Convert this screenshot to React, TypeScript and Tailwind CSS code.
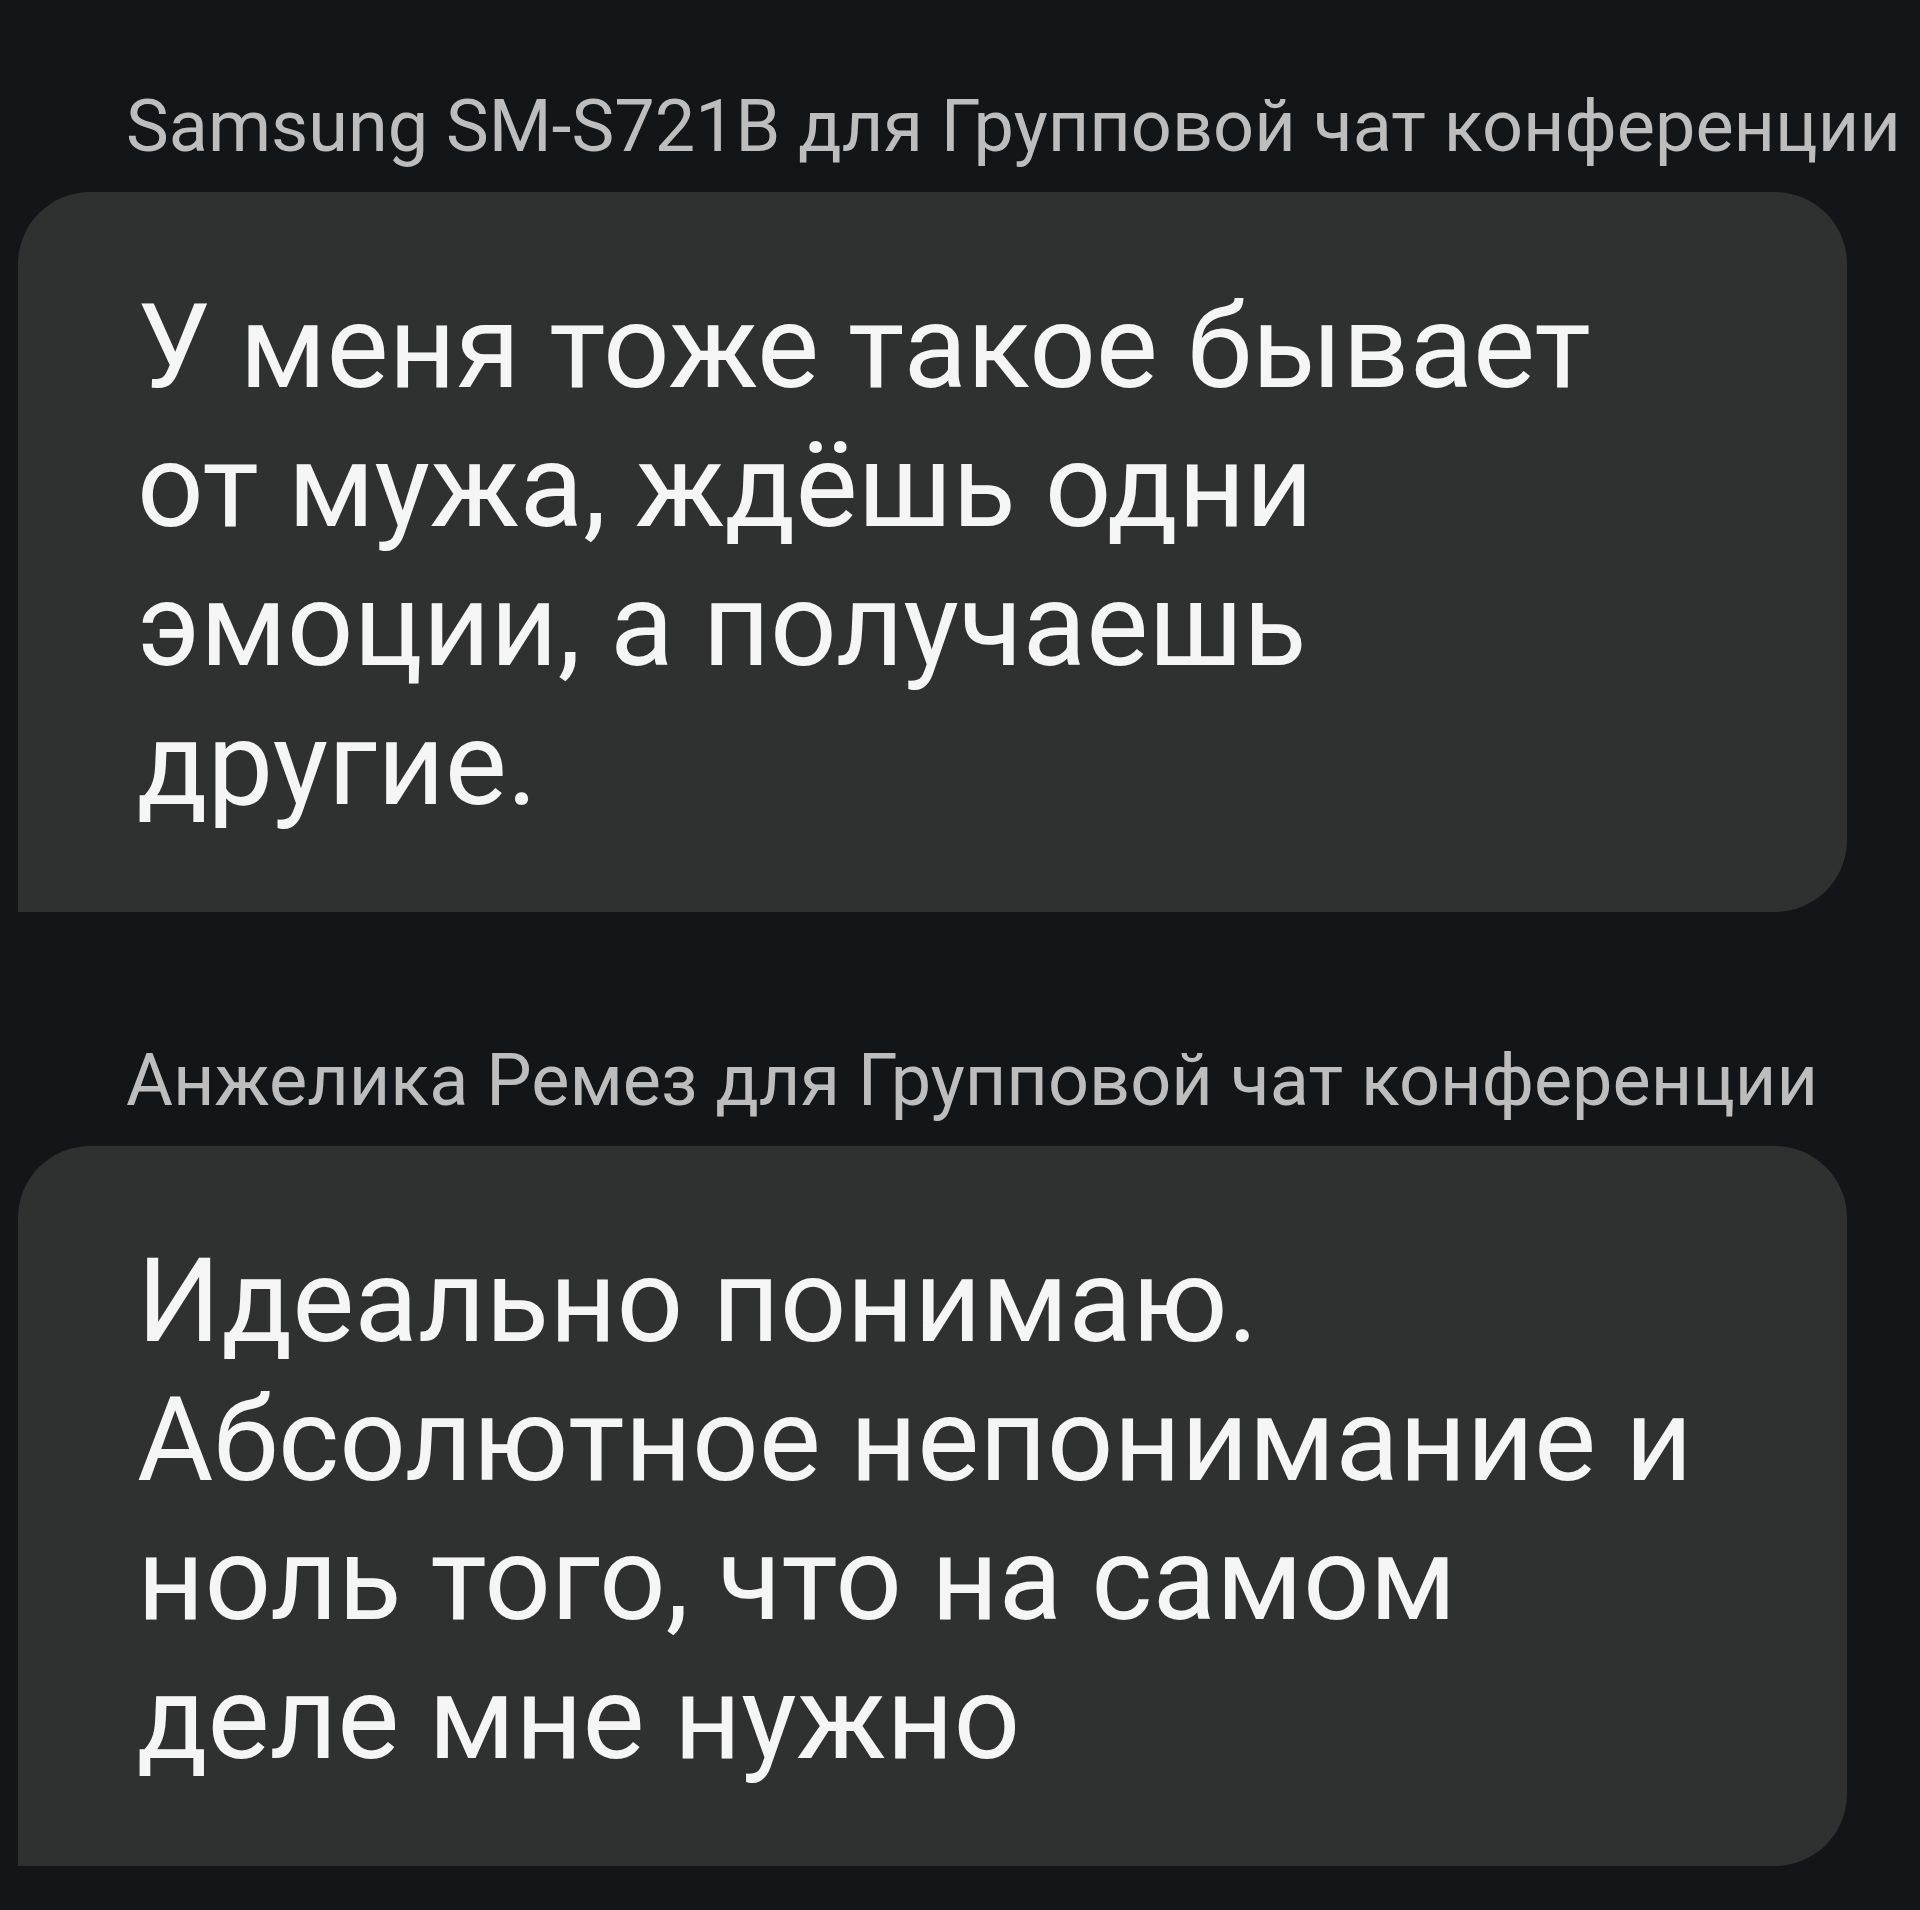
const messages = [
  {
    sender: "Samsung SM-S721B",
    lines: [
      "У меня тоже такое бывает",
      "от мужа, ждёшь одни",
      "эмоции, а получаешь",
      "другие.",
    ],
  },
  {
    sender: "Анжелика Ремез",
    lines: [
      "Идеально понимаю.",
      "Абсолютное непонимание и",
      "ноль того, что на самом",
      "деле мне нужно",
    ],
  },
];

function Message({ sender, lines }: { sender: string; lines: string[] }) {
  return (
    <div className="flex flex-col">
      {/* sender line */}
      <div className="whitespace-nowrap pl-[126px] text-[72px] leading-[86px] text-[#bdbdbd]">
        {sender} для Групповой чат конференции
      </div>

      {/* bubble */}
      <div className="ml-[18px] mt-[22px] w-[1829px] rounded-[72px] rounded-bl-none bg-[#2f3030] pb-[78px] pl-[119px] pt-[86px] text-[117px] leading-[139px] text-[#f5f5f5]">
        {lines.map((line) => (
          <div key={line} className="whitespace-nowrap">
            {line}
          </div>
        ))}
      </div>
    </div>
  );
}

export default function App() {
  return (
    <div className="flex min-h-[1910px] w-[1920px] flex-col gap-[126px] overflow-hidden bg-[#131619] pt-[84px] font-['Roboto','Noto_Sans',sans-serif]">
      {messages.map((m) => (
        <Message key={m.sender} sender={m.sender} lines={m.lines} />
      ))}
    </div>
  );
}
